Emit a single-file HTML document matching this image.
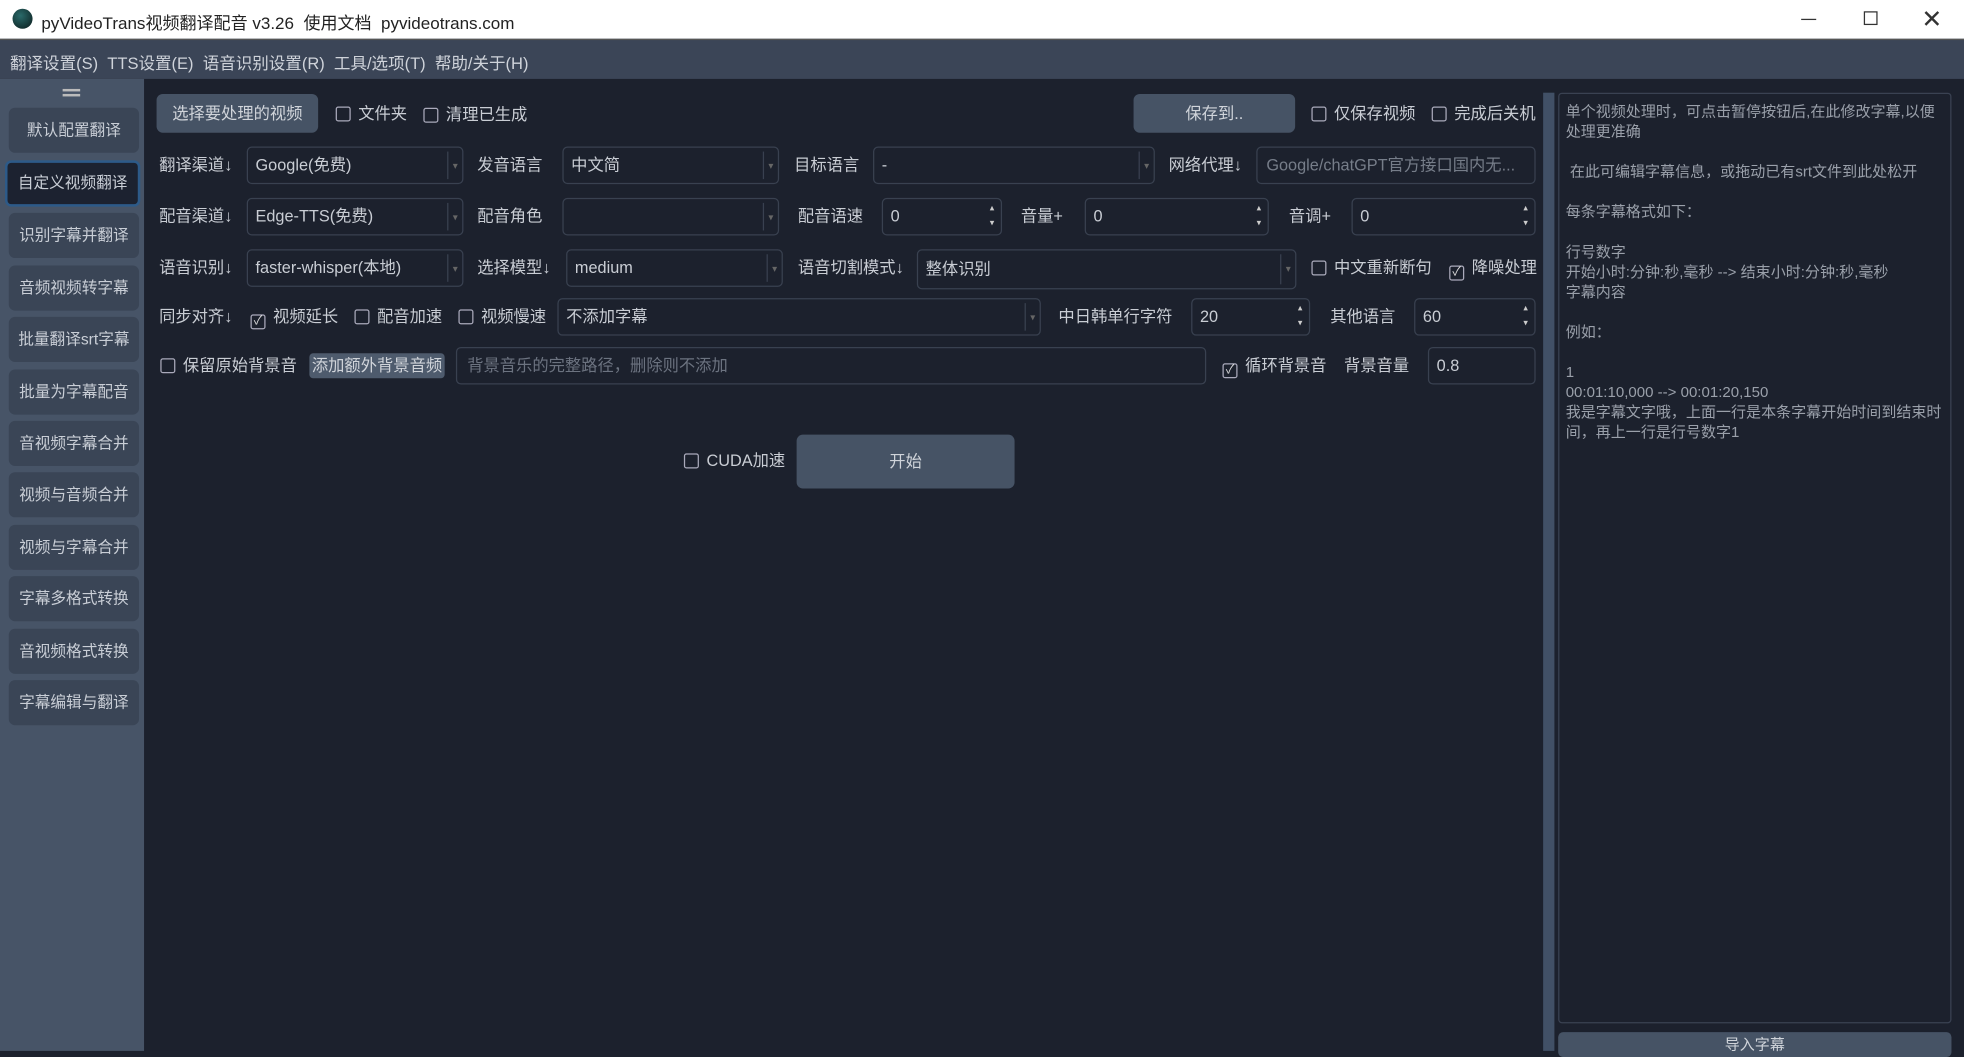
<!DOCTYPE html>
<html><head><meta charset="utf-8"><style>
*{box-sizing:border-box;margin:0;padding:0}
html,body{width:1964px;height:1051px;overflow:hidden;background:#1c212d}
#w{position:absolute;left:0;top:0;width:1568px;height:839px;transform:scale(1.25255);transform-origin:0 0;font-family:"Liberation Sans","Noto Sans CJK SC",sans-serif;font-size:13px;color:#c9cdd4;background:#1c212d}
.a{position:absolute;white-space:nowrap}
.title{left:0;top:0;width:1568px;height:31px;background:#fff;color:#222}
.menu{left:0;top:31px;width:1568px;height:32px;background:#3b4557;border-top:1px solid #555}
.side{left:0;top:63px;width:115px;height:776px;background:#475467}
.sb{left:7px;width:104px;height:36px;background:#3a4556;border-radius:5px;text-align:center;line-height:36px;font-size:12.5px;color:#c9ced6}
.sel{background:#1c2230;border:2px solid #2d5a88;line-height:32px}
.lbl{font-size:13px;line-height:16px}
.box{height:30px;border:1px solid #394150;border-radius:4px;background:#1c212d;padding-left:6px;line-height:28px;color:#c9cdd4}
.cb .arr{position:absolute;right:0;top:3px;bottom:3px;width:12px;border-left:1px solid #394150;color:#666;font-size:8px;text-align:center;line-height:24px}
.sp .arr{position:absolute;right:3px;top:2px;width:8px;font-size:7px;line-height:12px;color:#ccc;text-align:center}
.btn{background:#465365;border-radius:5px;text-align:center;color:#d0d4da}
.ck{display:inline-block;width:12px;height:12px;border:1px solid #aab;border-radius:2px;vertical-align:-2px;margin-right:6px;font-size:10px;line-height:10px;text-align:center;color:#ddd}
</style></head><body><div id="w">
<div class="a title"><div class="a" style="left:10px;top:7px;width:16px;height:16px;border-radius:50%;background:radial-gradient(circle at 40% 35%,#2a6a6a,#0a1a1a)"></div><div class="a" style="left:33px;top:7px;font-size:13.6px">pyVideoTrans视频翻译配音 v3.26&nbsp;&nbsp;使用文档&nbsp;&nbsp;pyvideotrans.com</div>
<div class="a" style="left:1438px;top:15px;width:12px;height:1px;background:#333"></div>
<div class="a" style="left:1488px;top:9px;width:11px;height:11px;border:1px solid #333"></div>
<div class="a" style="left:1534px;top:3px;font-size:20px;color:#333">✕</div></div>
<div class="a menu"><div class="a" style="left:8px;top:8px;font-size:13.2px;color:#cfd3da">翻译设置(S)&nbsp;&nbsp;TTS设置(E)&nbsp;&nbsp;语音识别设置(R)&nbsp;&nbsp;工具/选项(T)&nbsp;&nbsp;帮助/关于(H)</div></div>
<div class="a side"></div>
<div class="a" style="left:50px;top:71px;width:14px;height:2px;background:#bbb"></div><div class="a" style="left:50px;top:75px;width:14px;height:2px;background:#bbb"></div>
<div class="a sb" style="top:86px">默认配置翻译</div>
<div class="a sb sel" style="top:128px;left:4px;width:108px;height:37px">自定义视频翻译</div>
<div class="a sb" style="top:170px">识别字幕并翻译</div>
<div class="a sb" style="top:212px">音频视频转字幕</div>
<div class="a sb" style="top:253px">批量翻译srt字幕</div>
<div class="a sb" style="top:295px">批量为字幕配音</div>
<div class="a sb" style="top:336px">音视频字幕合并</div>
<div class="a sb" style="top:377px">视频与音频合并</div>
<div class="a sb" style="top:419px">视频与字幕合并</div>
<div class="a sb" style="top:460px">字幕多格式转换</div>
<div class="a sb" style="top:502px">音视频格式转换</div>
<div class="a sb" style="top:543px">字幕编辑与翻译</div>

<div class="a btn" style="left:125px;top:75px;width:129px;height:31px;line-height:31px">选择要处理的视频</div>
<div class="a lbl" style="left:268px;top:83px"><span class="ck"></span>文件夹</div>
<div class="a lbl" style="left:338px;top:84px"><span class="ck"></span>清理已生成</div>
<div class="a btn" style="left:905px;top:75px;width:129px;height:31px;line-height:31px">保存到..</div>
<div class="a lbl" style="left:1047px;top:83px"><span class="ck"></span>仅保存视频</div>
<div class="a lbl" style="left:1143px;top:83px"><span class="ck"></span>完成后关机</div>

<div class="a lbl" style="left:127px;top:124px">翻译渠道↓</div>
<div class="a box cb" style="left:197px;top:117px;width:173px">Google(免费)<span class="arr">▾</span></div>
<div class="a lbl" style="left:381px;top:124px">发音语言</div>
<div class="a box cb" style="left:449px;top:117px;width:173px">中文简<span class="arr">▾</span></div>
<div class="a lbl" style="left:634px;top:124px">目标语言</div>
<div class="a box cb" style="left:697px;top:117px;width:225px">-<span class="arr">▾</span></div>
<div class="a lbl" style="left:933px;top:124px">网络代理↓</div>
<div class="a box" style="left:1003px;top:117px;width:223px;padding-left:7px;color:#767d89">Google/chatGPT官方接口国内无...</div>

<div class="a lbl" style="left:127px;top:165px">配音渠道↓</div>
<div class="a box cb" style="left:197px;top:158px;width:173px">Edge-TTS(免费)<span class="arr">▾</span></div>
<div class="a lbl" style="left:381px;top:165px">配音角色</div>
<div class="a box cb" style="left:449px;top:158px;width:173px"><span class="arr">▾</span></div>
<div class="a lbl" style="left:637px;top:165px">配音语速</div>
<div class="a box sp" style="left:704px;top:158px;width:96px">0<span class="arr">▴<br>▾</span></div>
<div class="a lbl" style="left:815px;top:165px">音量+</div>
<div class="a box sp" style="left:866px;top:158px;width:147px">0<span class="arr">▴<br>▾</span></div>
<div class="a lbl" style="left:1029px;top:165px">音调+</div>
<div class="a box sp" style="left:1079px;top:158px;width:147px">0<span class="arr">▴<br>▾</span></div>

<div class="a lbl" style="left:127px;top:206px">语音识别↓</div>
<div class="a box cb" style="left:197px;top:199px;width:173px">faster-whisper(本地)<span class="arr">▾</span></div>
<div class="a lbl" style="left:381px;top:206px">选择模型↓</div>
<div class="a box cb" style="left:452px;top:199px;width:173px">medium<span class="arr">▾</span></div>
<div class="a lbl" style="left:637px;top:206px">语音切割模式↓</div>
<div class="a box cb" style="left:732px;top:199px;width:303px;height:32px;line-height:30px">整体识别<span class="arr">▾</span></div>
<div class="a lbl" style="left:1047px;top:206px"><span class="ck"></span>中文重新断句</div>
<div class="a lbl" style="left:1157px;top:206px"><span class="ck">✓</span>降噪处理</div>

<div class="a lbl" style="left:127px;top:245px">同步对齐↓</div>
<div class="a lbl" style="left:200px;top:245px"><span class="ck">✓</span>视频延长</div>
<div class="a lbl" style="left:283px;top:245px"><span class="ck"></span>配音加速</div>
<div class="a lbl" style="left:366px;top:245px"><span class="ck"></span>视频慢速</div>
<div class="a box cb" style="left:445px;top:238px;width:386px">不添加字幕<span class="arr">▾</span></div>
<div class="a lbl" style="left:845px;top:245px">中日韩单行字符</div>
<div class="a box sp" style="left:951px;top:238px;width:95px">20<span class="arr">▴<br>▾</span></div>
<div class="a lbl" style="left:1062px;top:245px">其他语言</div>
<div class="a box sp" style="left:1129px;top:238px;width:97px">60<span class="arr">▴<br>▾</span></div>

<div class="a lbl" style="left:128px;top:284px"><span class="ck"></span>保留原始背景音</div>
<div class="a btn" style="left:247px;top:282px;width:108px;height:20px;line-height:20px;background:#4e5b6d;border-radius:3px">添加额外背景音频</div>
<div class="a box" style="left:364px;top:277px;width:599px;color:#6c7380;padding-left:8px">背景音乐的完整路径，删除则不添加</div>
<div class="a lbl" style="left:976px;top:284px"><span class="ck">✓</span>循环背景音</div>
<div class="a lbl" style="left:1073px;top:284px">背景音量</div>
<div class="a box" style="left:1140px;top:277px;width:86px">0.8</div>

<div class="a lbl" style="left:546px;top:360px"><span class="ck"></span>CUDA加速</div>
<div class="a btn" style="left:636px;top:347px;width:174px;height:43px;line-height:43px">开始</div>

<div class="a" style="left:1232px;top:74px;width:9px;height:765px;background:#415066"></div>
<div class="a" style="left:1244px;top:74px;width:314px;height:743px;border:1px solid #3a4252;border-radius:3px;background:#1c212d;padding:6px 5px;font-size:12px;line-height:16px;color:#9aa0aa;white-space:normal">单个视频处理时，可点击暂停按钮后,在此修改字幕,以便处理更准确<br><br>&nbsp;在此可编辑字幕信息，或拖动已有srt文件到此处松开<br><br>每条字幕格式如下：<br><br>行号数字<br>开始小时:分钟:秒,毫秒 --&gt; 结束小时:分钟:秒,毫秒<br>字幕内容<br><br>例如：<br><br>1<br>00:01:10,000 --&gt; 00:01:20,150<br>我是字幕文字哦，上面一行是本条字幕开始时间到结束时间，再上一行是行号数字1</div>
<div class="a btn" style="left:1244px;top:824px;width:314px;height:20px;line-height:20px;font-size:12px;border-radius:4px">导入字幕</div>
</div></body></html>
